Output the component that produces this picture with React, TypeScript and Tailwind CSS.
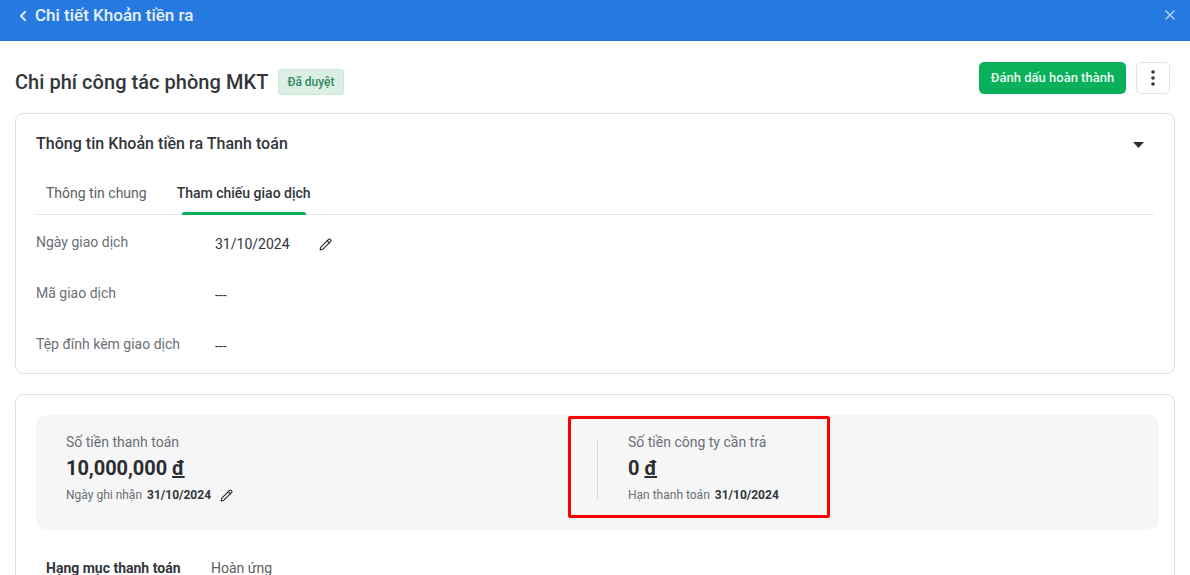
import { ChevronLeft, X, Pencil } from "lucide-react";

function Row({ label, value, edit }: { label: string; value: string; edit?: boolean }) {
  return (
    <div className="flex h-[51px] items-start">
      <div className="w-[179px] text-[14px] leading-[20px] text-[#6b6f76] pt-[8px]">{label}</div>
      <div className="flex items-center text-[14px] leading-[20px] text-[#33363b] pt-[10px]">
        <span>{value}</span>
        {edit && <Pencil className="ml-[29px] w-[13px] h-[13px] text-[#25282c]" strokeWidth={2} />}
      </div>
    </div>
  );
}

export default function App() {
  return (
    <div className="relative h-[575px] w-[1190px] overflow-hidden bg-white font-['Roboto',sans-serif] text-[#2f3237]">
      <header className="flex h-[41px] items-start justify-between bg-[#267adf] border-b border-[#2270ce] pl-[15px] pr-[12px] text-white">
        <div className="flex items-center h-[31px]">
          <ChevronLeft className="w-[16px] h-[16px] text-[#dce9fa]" strokeWidth={3.2} />
          <span className="ml-[4px] text-[17px] font-medium leading-[31px] text-[#e6f0fc]">Chi tiết Khoản tiền ra</span>
        </div>
        <X className="mt-[7px] w-[16px] h-[16px] text-[#b9d3f3]" strokeWidth={2} />
      </header>

      <div className="flex h-[72px] items-start justify-between px-[15px]">
        <div className="flex items-center pt-[28px]">
          <h1 className="text-[20px] font-medium leading-[26px] text-[#33363b] tracking-[0.04px]">Chi phí công tác phòng MKT</h1>
          <span className="ml-[10px] flex h-[26px] items-center rounded-[3px] border border-[#cfe6da] bg-[#dcefe5] px-[8px] text-[12px] font-medium text-[#2f8a5b]">Đã duyệt</span>
        </div>
        <div className="flex items-center gap-[10px] pt-[21px] pr-[5px]">
          <button className="h-[32px] w-[147px] rounded-[5px] bg-[#0bb05a] text-[13px] font-medium text-[#e8f8ef]">Đánh dấu hoàn thành</button>
          <button className="flex h-[32px] w-[34px] items-center justify-center rounded-[5px] border border-[#e3e4e6] bg-white">
            <svg width="4" height="16" viewBox="0 0 4 16" fill="#33363b"><circle cx="2" cy="2" r="1.8" /><circle cx="2" cy="8" r="1.8" /><circle cx="2" cy="14" r="1.8" /></svg>
          </button>
        </div>
      </div>

      <section className="mx-[15px] h-[261px] rounded-[8px] border border-[#dedfe1] bg-white px-[20px]">
        <div className="flex h-[59px] items-center justify-between pr-[10px]">
          <h2 className="pt-[1px] text-[16px] font-medium text-[#33363b] tracking-[0.03px]">Thông tin Khoản tiền ra Thanh toán</h2>
          <svg width="11" height="6" viewBox="0 0 11 6" className="mt-[2px]"><path d="M0 0h11L5.5 6z" fill="#2b2e33" /></svg>
        </div>
        <div className="flex h-[42px] items-end border-b border-[#e6e7e8]">
          <div className="ml-[10px] h-[41px] text-[14px] leading-[40px] text-[#5b5e63]">Thông tin chung</div>
          <div className="relative ml-[20px] h-[41px] px-[10px] text-[14px] font-medium leading-[40px] text-[#33363b]">
            Tham chiếu giao dịch
            <div className="absolute bottom-[-1px] left-[15px] right-[15px] h-[3px] rounded-t-[2px] bg-[#0bb05a]" />
          </div>
        </div>
        <div className="pt-[9px]">
          <Row label="Ngày giao dịch" value="31/10/2024" edit />
          <Row label="Mã giao dịch" value="---" />
          <Row label="Tệp đính kèm giao dịch" value="---" />
        </div>
      </section>

      <section className="mx-[15px] mt-[20px] h-[220px] rounded-[8px] border border-[#dedfe1] bg-white px-[20px] pt-[20px]">
        <div className="flex h-[115px] w-[1123px] rounded-[10px] bg-[#f6f6f6] pt-[15px]">
          <div className="w-[561px] pl-[30px] shrink-0">
            <div className="text-[14px] leading-[24px] text-[#6b6f76]">Số tiền thanh toán</div>
            <div className="text-[20px] font-bold leading-[28px] text-[#2a2d31] tracking-[-0.05px]">10,000,000 <span className="underline">đ</span></div>
            <div className="mt-[4px] flex items-center leading-[18px]">
              <span className="text-[12px] text-[#6b6f76]">Ngày ghi nhận</span>
              <span className="ml-[5px] text-[12px] font-bold text-[#33363b]">31/10/2024</span>
              <Pencil className="ml-[9px] w-[13px] h-[13px] text-[#25282c]" strokeWidth={2} />
            </div>
          </div>
          <div className="flex h-[60px] mt-[10px] w-px bg-[#dcdcdc] shrink-0" />
          <div className="pl-[30px]">
            <div className="text-[14px] leading-[24px] text-[#6b6f76]">Số tiền công ty cần trả</div>
            <div className="text-[20px] font-bold leading-[28px] text-[#2a2d31]">0 <span className="underline">đ</span></div>
            <div className="mt-[4px] flex items-center leading-[18px]">
              <span className="text-[12px] text-[#6b6f76]">Hạn thanh toán</span>
              <span className="ml-[5px] text-[12px] font-bold text-[#33363b]">31/10/2024</span>
            </div>
          </div>
        </div>
        <div className="mt-[28px] flex text-[14px] leading-[20px]">
          <div className="ml-[10px] w-[165px] font-bold text-[#33363b]">Hạng mục thanh toán</div>
          <div className="text-[#5b5e63]">Hoàn ứng</div>
        </div>
      </section>

      <div className="pointer-events-none absolute left-[568px] top-[416px] h-[102px] w-[262px] rounded-[2px] border-[3px] border-[#fa0000]" />
    </div>
  );
}
